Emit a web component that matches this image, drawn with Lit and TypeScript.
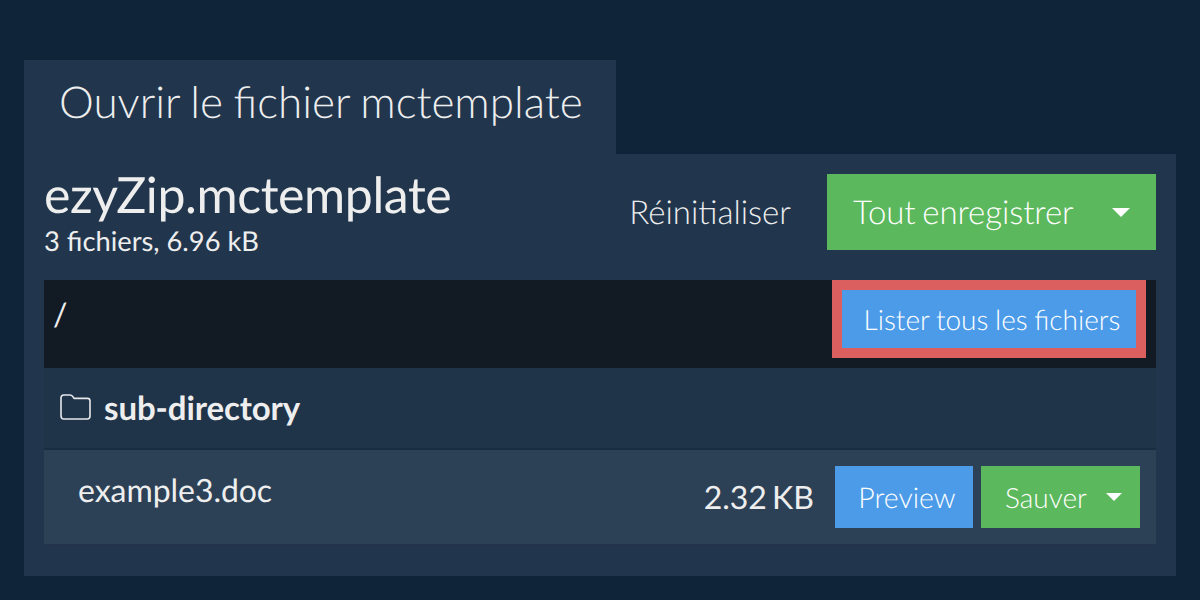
import { LitElement, html, css } from "lit";
import { customElement } from "lit/decorators.js";

@customElement("app-root")
export class AppRoot extends LitElement {
  static styles = css`
    :host { display: block; width: 1200px; height: 600px; box-sizing: border-box; padding: 60px 24px 24px; background: #0f2439; font-family: Lato, sans-serif; color: #eeeeee; overflow: hidden; text-rendering: geometricPrecision; -webkit-font-smoothing: antialiased; }
    * { box-sizing: border-box; }
    .tab { width: 592px; height: 94px; background: #21364d; display: flex; align-items: center; padding: 0 0 11px 35px; font-size: 44px; font-weight: 300; word-spacing: -1.3px; }
    .panel { height: 422px; background: #21364d; padding: 0 20px; }
    .head { height: 126px; display: flex; align-items: flex-start; }
    .title { flex: 1; padding-top: 13px; }
    .name { font-size: 50px; line-height: 54px; font-weight: 400; letter-spacing: -0.4px; }
    .count { font-size: 27.3px; line-height: 26px; margin-top: 7px; }
    .reset { font-size: 33px; font-weight: 300; margin: 20px 36px 0 0; height: 76px; display: flex; align-items: center; padding-bottom: 1px; }
    .btn { color: #fff; font-weight: 300; display: flex; align-items: center; }
    .green { background: #5cb85c; }
    .blue { background: #4c9be8; }
    .all { margin-top: 20px; width: 329px; height: 76px; font-size: 33px; padding: 0 26px 1px; justify-content: space-between; letter-spacing: -0.1px; word-spacing: -2px; }
    .all .caret { margin-top: 1px; }
    .caret { width: 0; height: 0; border-left: 9px solid transparent; border-right: 9px solid transparent; border-top: 9px solid #fff; }
    .path { height: 88px; background: #121a24; display: flex; justify-content: space-between; align-items: flex-start; padding: 0 10px; }
    .slash { font-size: 32px; line-height: 68px; font-weight: 400; margin-left: -1px; }
    .list { border: 10px solid #dc5f5f; height: 78px; width: 314px; }
    .list .btn { height: 100%; font-size: 28px; justify-content: center; word-spacing: -1px; padding-left: 6px; }
    .folder { height: 82px; background: #1f3349; border-bottom: 2px solid #1a2c40; display: flex; align-items: center; gap: 13px; padding-left: 16px; font-size: 33px; font-weight: 700; letter-spacing: -0.1px; }
    .folder svg { display: block; width: 31px; height: 26px; margin-top: -2px; }
    .file { height: 96px; background: #2c4056; border-bottom: 2px solid #23344a; display: flex; align-items: flex-start; padding: 16px 16px 0 34px; }
    .fname { flex: 1; font-size: 32px; line-height: 48px; letter-spacing: -0.05px; }
    .size { font-size: 32px; line-height: 62px; margin-right: 21px; word-spacing: -3px; }
    .preview { width: 138px; height: 62px; font-size: 28.5px; justify-content: center; margin-right: 8px; padding: 1px 0 0 6px; }
    .save { width: 159px; height: 62px; font-size: 28px; padding: 0 18px 0 24px; justify-content: space-between; }
    .save .caret { border-left-width: 8px; border-right-width: 8px; border-top-width: 8px; }
  `;

  render() {
    return html`
      <div class="tab">Ouvrir le fichier mctemplate</div>
      <div class="panel">
        <div class="head">
          <div class="title">
            <div class="name">ezyZip.mctemplate</div>
            <div class="count">3 fichiers, 6.96 kB</div>
          </div>
          <div class="reset">Réinitialiser</div>
          <div class="btn green all"><span>Tout enregistrer</span><span class="caret"></span></div>
        </div>
        <div class="path">
          <div class="slash">/</div>
          <div class="list"><div class="btn blue">Lister tous les fichiers</div></div>
        </div>
        <div class="folder">
          <svg viewBox="0 0 31 26" fill="none" stroke="#e6e8ea" stroke-width="1.6" stroke-linejoin="round">
            <path d="M1 21.5V4C1 2.3 2 1 3.8 1H10C11.4 1 12 1.6 12.8 2.6L14 4.4H27.5C29 4.4 30 5.6 30 7V22C30 23.7 29 25 27.2 25H3.8C2 25 1 23.4 1 21.5Z" />
          </svg>
          <span>sub-directory</span>
        </div>
        <div class="file">
          <div class="fname">example3.doc</div>
          <div class="size">2.32 KB</div>
          <div class="btn blue preview">Preview</div>
          <div class="btn green save"><span>Sauver</span><span class="caret"></span></div>
        </div>
      </div>
    `;
  }
}
